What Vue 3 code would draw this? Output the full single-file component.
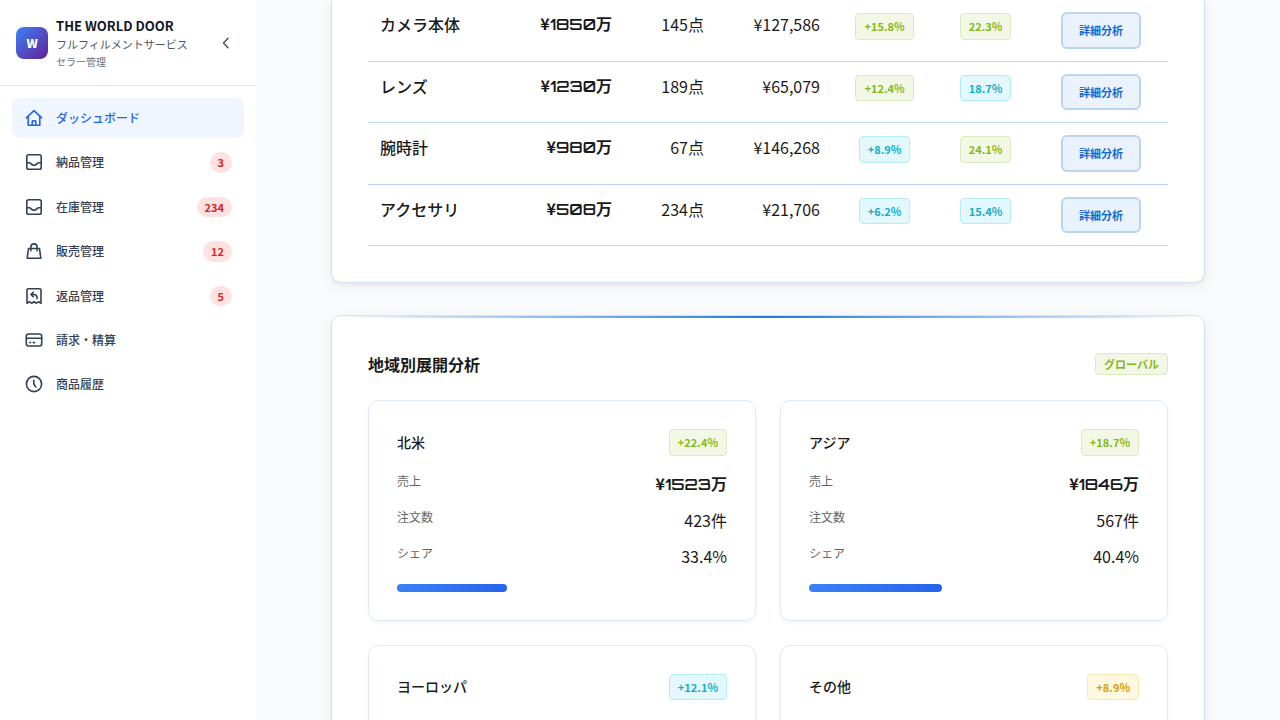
<script setup>
const navItems = [
  { label: 'ダッシュボード', icon: 'home', active: true },
  { label: '納品管理', icon: 'inbox', count: 3 },
  { label: '在庫管理', icon: 'inbox', count: 234 },
  { label: '販売管理', icon: 'bag', count: 12 },
  { label: '返品管理', icon: 'receipt', count: 5 },
  { label: '請求・精算', icon: 'card' },
  { label: '商品履歴', icon: 'clock' },
]

const icons = {
  home: ['M2.3 9.8 10 2.6l7.7 7.2', 'M4.2 8.4v8.9h11.6V8.4', 'M8.2 17v-3.3a.8.8 0 0 1 .8-.8h2a.8.8 0 0 1 .8.8V17'],
  inbox: ['M4.6 2.8h10.8a1.8 1.8 0 0 1 1.8 1.8v10.8a1.8 1.8 0 0 1-1.8 1.8H4.6a1.8 1.8 0 0 1-1.8-1.8V4.6a1.8 1.8 0 0 1 1.8-1.8z', 'M2.8 10.7h2.7c1.3 0 1.7 2.5 4.5 2.5s3.2-2.5 4.5-2.5h2.7'],
  bag: ['M4.5 7.5h11l1.3 9.7H3.2z', 'M6.9 9.8V6a3.1 3.1 0 0 1 6.2 0v3.800'],
  receipt: ['M3 17.2V4.1a1.3 1.3 0 0 1 1.300-1.300h11.400a1.300 1.300 0 0 1 1.300 1.300v13.100l-2.500-1.400-2.200 1.400-2.300-1.400-2.300 1.400-2.200-1.400z', 'M9.300 6.300 7 8.500l2.300 2.200', 'M7.200 8.500h2.600c2 0 3.200 1.200 3.200 3.200v.8'],
  card: ['M4.500 4h11a2.200 2.200 0 0 1 2.200 2.200v7.600a2.200 2.200 0 0 1-2.200 2.200h-11a2.200 2.200 0 0 1-2.200-2.200V6.200A2.200 2.200 0 0 1 4.500 4z', 'M2.300 8.200h15.400', 'M5.900 12.600h.6M9.300 12.600h1.200'],
  clock: ['M10 2.400a7.600 7.600 0 1 0 0 15.200 7.600 7.600 0 0 0 0-15.200z', 'M9.800 6.200V10l2 3'],
}

const categories = [
  { name: 'カメラ本体', sales: '¥1850万', qty: '145点', price: '¥127,586', growth: '+15.8%', growthTone: 'green', margin: '22.3%', marginTone: 'green' },
  { name: 'レンズ', sales: '¥1230万', qty: '189点', price: '¥65,079', growth: '+12.4%', growthTone: 'green', margin: '18.7%', marginTone: 'cyan' },
  { name: '腕時計', sales: '¥980万', qty: '67点', price: '¥146,268', growth: '+8.9%', growthTone: 'cyan', margin: '24.1%', marginTone: 'green' },
  { name: 'アクセサリ', sales: '¥508万', qty: '234点', price: '¥21,706', growth: '+6.2%', growthTone: 'cyan', margin: '15.4%', marginTone: 'cyan' },
]

const regions = [
  { name: '北米', growth: '+22.4%', tone: 'green', sales: '¥1523万', orders: '423件', share: 33.4 },
  { name: 'アジア', growth: '+18.7%', tone: 'green', sales: '¥1846万', orders: '567件', share: 40.4 },
  { name: 'ヨーロッパ', growth: '+12.1%', tone: 'cyan' },
  { name: 'その他', growth: '+8.9%', tone: 'yellow' },
]
</script>

<template>
  <div class="layout">
    <aside class="sidebar">
      <header class="brand">
        <div class="logo">W</div>
        <div class="brand-text">
          <strong>THE WORLD DOOR</strong>
          <span class="service">フルフィルメントサービス</span>
          <span class="role">セラー管理</span>
        </div>
        <button class="collapse" type="button" aria-label="サイドバーを閉じる">
          <svg viewBox="0 0 20 20"><path d="M12 5.200 7.500 10l4.500 4.800" /></svg>
        </button>
      </header>
      <nav class="nav">
        <a v-for="item in navItems" :key="item.label" href="#" class="nav-item" :class="{ active: item.active }">
          <svg viewBox="0 0 20 20" aria-hidden="true">
            <path v-for="d in icons[item.icon]" :key="d" :d="d" />
          </svg>
          <span class="nav-label">{{ item.label }}</span>
          <span v-if="item.count" class="count">{{ item.count }}</span>
        </a>
      </nav>
    </aside>

    <main class="main">
      <section class="panel panel-table">
        <table>
          <colgroup>
            <col />
            <col class="col-sales" />
            <col class="col-qty" />
            <col class="col-price" />
            <col class="col-growth" />
            <col class="col-margin" />
            <col class="col-action" />
          </colgroup>
          <tbody>
            <tr v-for="row in categories" :key="row.name">
              <td class="name">{{ row.name }}</td>
              <td class="num sales">{{ row.sales }}</td>
              <td class="num">{{ row.qty }}</td>
              <td class="num">{{ row.price }}</td>
              <td class="mid"><span class="badge" :class="row.growthTone">{{ row.growth }}</span></td>
              <td class="mid"><span class="badge" :class="row.marginTone">{{ row.margin }}</span></td>
              <td class="mid"><button class="detail" type="button">詳細分析</button></td>
            </tr>
          </tbody>
        </table>
      </section>

      <section class="panel panel-regions">
        <div class="panel-head">
          <h2>地域別展開分析</h2>
          <span class="badge compact green">グローバル</span>
        </div>
        <div class="regions">
          <article v-for="region in regions" :key="region.name" class="region">
            <div class="region-head">
              <h3>{{ region.name }}</h3>
              <span class="badge" :class="region.tone">{{ region.growth }}</span>
            </div>
            <template v-if="region.share">
              <dl>
                <div><dt>売上</dt><dd class="sales">{{ region.sales }}</dd></div>
                <div><dt>注文数</dt><dd>{{ region.orders }}</dd></div>
                <div><dt>シェア</dt><dd>{{ region.share }}%</dd></div>
              </dl>
              <div class="track"><div class="bar" :style="{ width: region.share + '%' }"></div></div>
            </template>
          </article>
        </div>
      </section>
    </main>
  </div>
</template>

<style>
body {
  margin: 0;
  background: #f8fafc;
}
</style>

<style scoped>
.layout {
  display: flex;
  height: 100vh;
  overflow: hidden;
  background: #f8fafc;
  color: #1a1a1a;
  font-family: "Noto Sans CJK JP", "Noto Sans", sans-serif;
  font-size: 16px;
  line-height: 1.5;
}
.layout *,
.layout *::before {
  box-sizing: border-box;
}
button {
  font-family: inherit;
  cursor: pointer;
}
svg {
  width: 20px;
  height: 20px;
  flex: none;
  fill: none;
  stroke: currentColor;
  stroke-width: 1.5;
  stroke-linecap: round;
  stroke-linejoin: round;
}

.sidebar {
  flex: none;
  width: 256px;
  background: #fff;
}
.brand {
  display: flex;
  align-items: center;
  gap: 8px;
  padding: 16px 16px 15px;
  border-bottom: 1px solid #e5e7eb;
}
.logo {
  display: grid;
  place-items: center;
  width: 32px;
  height: 32px;
  border-radius: 8px;
  background: linear-gradient(135deg, #3b82f6, #641e96);
  color: #fff;
  font-size: 12px;
  font-weight: 900;
}
.brand-text {
  flex: 1;
  display: flex;
  flex-direction: column;
  white-space: nowrap;
}
.brand-text strong {
  color: #111827;
  font-size: 13px;
  line-height: 20px;
}
.service {
  color: #4b5563;
  font-size: 11px;
  line-height: 17px;
}
.role {
  color: #6b7280;
  font-size: 10px;
  line-height: 17px;
}
.collapse {
  display: grid;
  padding: 4px;
  border: 0;
  background: none;
  color: #4b5563;
}
.nav {
  display: flex;
  flex-direction: column;
  gap: 4px;
  padding: 12px;
}
.nav-item {
  display: flex;
  align-items: center;
  gap: 12px;
  padding: 10px 12px;
  border-radius: 8px;
  color: #334155;
  font-size: 12px;
  font-weight: 500;
  text-decoration: none;
}
.nav-item svg {
  stroke-width: 1.6;
}
.nav-item.active {
  background: #eff6ff;
  color: #2563eb;
}
.nav-label {
  flex: 1;
}
.count {
  padding: 2px 8px;
  border-radius: 999px;
  background: #fee2e2;
  color: #dc2626;
  font-size: 11px;
  font-weight: 700;
}

.main {
  flex: 1;
  min-width: 0;
  display: flex;
  flex-direction: column;
  gap: 32px;
  padding: 0 75px;
}
.panel {
  position: relative;
  flex: none;
  padding: 36px;
  border: 1px solid #d3e3f7;
  border-radius: 10px;
  background: #fff;
  box-shadow: 0 2px 4px rgba(0, 0, 0, 0.06), 0 4px 16px rgba(0, 0, 0, 0.04);
}
.panel-table {
  padding-top: 0;
  border-top: 0;
  border-radius: 0 0 10px 10px;
}
.panel-regions {
  overflow: hidden;
}
.panel-regions::before {
  content: "";
  position: absolute;
  top: 0;
  left: 0;
  right: 0;
  height: 2px;
  background: linear-gradient(90deg, transparent, #1f78dc, transparent);
}

table {
  width: 100%;
  table-layout: fixed;
  border-spacing: 0;
}
.col-sales { width: 120px; }
.col-qty { width: 92px; }
.col-price { width: 116px; }
.col-growth { width: 105px; }
.col-margin { width: 97px; }
.col-action { width: 134px; }
td {
  padding: 12px;
  border-bottom: 1px solid #bfd7f2;
  vertical-align: top;
}
.mid {
  padding-left: 0;
  padding-right: 0;
  text-align: center;
}
.mid .badge {
  margin-top: 1px;
}
.num {
  text-align: right;
  white-space: nowrap;
}
.sales {
  font-family: Orbitron, "Noto Sans CJK JP", sans-serif;
  font-weight: 600;
}
.name {
  font-weight: 500;
}
.badge {
  display: inline-block;
  padding: 4px 8px;
  border: 1px solid;
  border-radius: 4px;
  font-size: 11px;
  font-weight: 700;
  vertical-align: top;
}
.badge.compact {
  padding: 2px 8px;
  line-height: 16px;
}
.green {
  border-color: #dcebbd;
  background: #f3f8e6;
  color: #84b81c;
}
.cyan {
  border-color: #b5ecf3;
  background: #e3f8fc;
  color: #12afc6;
}
.yellow {
  border-color: #fbeab5;
  background: #fff8e1;
  color: #d39e0b;
}
.detail {
  padding: 8px 16px;
  border: 2px solid #bad4f1;
  border-radius: 6px;
  background: #eaf3fb;
  color: #146cd6;
  font-size: 11px;
  font-weight: 700;
  line-height: 1.5;
  vertical-align: top;
}

.panel-head,
.region-head {
  display: flex;
  align-items: center;
  justify-content: space-between;
}
.panel-head {
  min-height: 24px;
  margin-bottom: 24px;
}
h2,
h3,
dl,
dd {
  margin: 0;
}
h2 {
  font-size: 16px;
  font-weight: 700;
  line-height: 1.3;
}
h3 {
  font-size: 14px;
  font-weight: 500;
}
.regions {
  display: grid;
  grid-template-columns: 1fr 1fr;
  gap: 24px;
}
.region {
  padding: 28px;
  border: 1px solid #deebfb;
  border-radius: 10px;
  box-shadow: 0 2px 4px rgba(0, 0, 0, 0.04);
}
.region-head {
  margin-bottom: 16px;
}
dl {
  display: grid;
  gap: 12px;
  margin-bottom: 16px;
}
dl div {
  display: flex;
  justify-content: space-between;
}
dt {
  color: #666;
  font-size: 12px;
}
.bar {
  height: 8px;
  border-radius: 4px;
  background: linear-gradient(135deg, #3b82f6, #2563eb);
}
</style>
